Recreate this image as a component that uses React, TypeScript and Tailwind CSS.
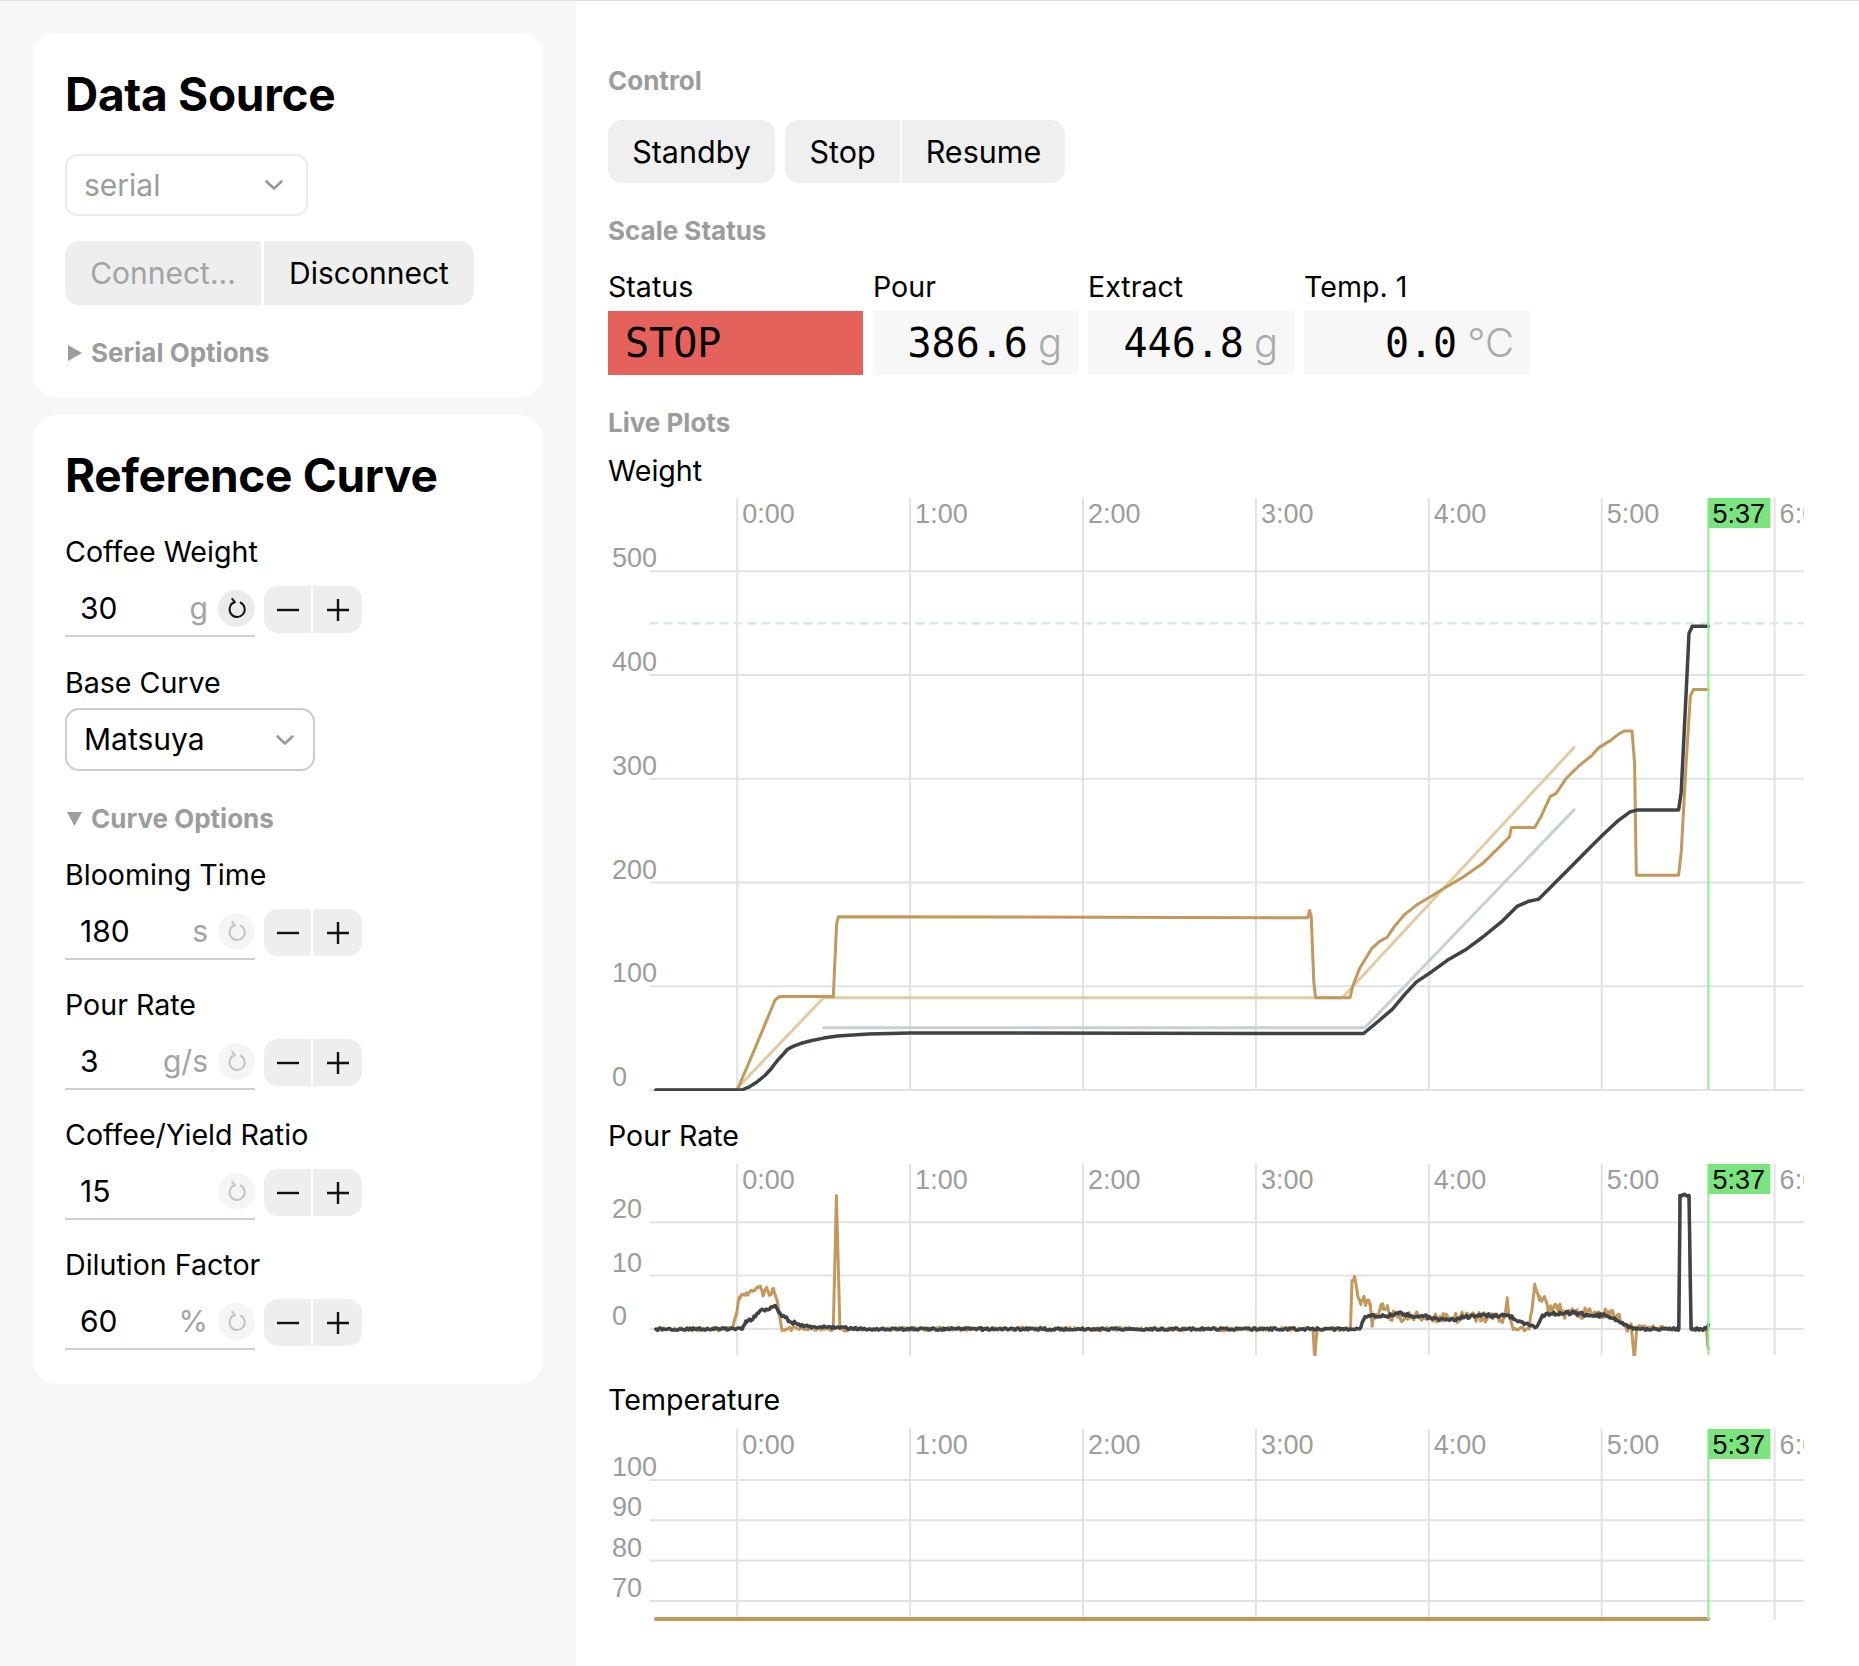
import React from 'react';

type Pt = [number, number];

const W = 1196;
const LEFT = 41.5;
const NOW = 5.617;
const X = (t: number) => 129.2 + 172.9 * t;

const TAN = '#c4985a';
const DARK = '#404346';
const LIGHT_TAN = '#e0cba2';
const BLUE_GRAY = '#c6cfd5';

function rng(seed: number) {
  let s = seed;
  return () => {
    s = (s * 16807) % 2147483647;
    return (s - 1) / 2147483646;
  };
}

function interp(keys: Pt[], t: number) {
  for (let i = 0; i < keys.length - 1; i++) {
    const [ta, va] = keys[i];
    const [tb, vb] = keys[i + 1];
    if (t >= ta && t <= tb) return tb === ta ? vb : va + ((vb - va) * (t - ta)) / (tb - ta);
  }
  return keys[keys.length - 1][1];
}

// keypoints plus a bit of sensor jitter between them
function jitter(keys: Pt[], amp: (v: number) => number, seed: number, step = 0.009): Pt[] {
  const r = rng(seed);
  const times = keys.map((k) => ({ t: k[0], key: true }));
  for (let t = keys[0][0] + step; t < keys[keys.length - 1][0]; t += step) times.push({ t, key: false });
  times.sort((a, b) => a.t - b.t);
  return times.map(({ t, key }) => {
    const v = interp(keys, t);
    return [t, key ? v : v + (r() - 0.5) * 2 * amp(v)] as Pt;
  });
}

const path = (pts: Pt[], Y: (v: number) => number) =>
  pts.map(([t, v], i) => `${i ? 'L' : 'M'}${X(t).toFixed(1)} ${Y(v).toFixed(1)}`).join(' ');

const weightTan: Pt[] = [
  [-0.47, 0], [0, 0], [0.09, 35], [0.22, 87], [0.245, 90], [0.556, 90], [0.575, 160], [0.585, 167],
  [3.3, 166], [3.31, 173], [3.32, 168], [3.335, 104], [3.345, 89], [3.544, 89], [3.56, 100], [3.6, 117],
  [3.668, 136], [3.713, 143], [3.758, 147], [3.803, 158], [3.859, 169], [3.927, 178], [4.017, 187],
  [4.084, 194], [4.197, 205], [4.309, 218], [4.377, 229], [4.467, 244], [4.478, 253], [4.613, 253],
  [4.647, 263], [4.703, 283], [4.737, 286], [4.793, 300], [4.872, 313], [4.94, 322], [4.984, 330],
  [5.052, 337], [5.097, 343], [5.13, 346], [5.175, 346], [5.19, 315], [5.2, 207], [5.445, 207],
  [5.46, 229], [5.49, 319], [5.513, 380], [5.531, 386], [NOW, 386],
];

const weightDark: Pt[] = [
  [-0.47, 0], [0.026, 0], [0.07, 3], [0.116, 8], [0.16, 14], [0.194, 20], [0.23, 28], [0.258, 33],
  [0.29, 39], [0.323, 42], [0.37, 45], [0.426, 47.5], [0.5, 50], [0.58, 52], [0.76, 54], [1.0, 55],
  [3.623, 54.5], [3.713, 67], [3.79, 78], [3.86, 92], [3.927, 104], [4.017, 114], [4.107, 125],
  [4.22, 136], [4.309, 147], [4.42, 162], [4.51, 177], [4.579, 182], [4.636, 184], [4.714, 197],
  [4.827, 216], [4.917, 231], [5.007, 246], [5.097, 260], [5.164, 268], [5.209, 270], [5.445, 270],
  [5.46, 287], [5.49, 388], [5.505, 440], [5.524, 447], [NOW, 447],
];

const weightRef: Pt[] = [[-0.01, 0], [0.5, 89], [3.5, 89], [4.84, 330]];
const weightExtractRef: Pt[] = [[0.5, 60], [3.63, 60], [4.84, 270]];

const pourTanKeys: Pt[] = [
  [-0.47, 0], [-0.026, 0], [0.013, 6], [0.05, 6.5], [0.1, 7.2], [0.13, 8], [0.15, 6.2], [0.17, 7.8],
  [0.19, 6.4], [0.21, 7.6], [0.233, 5], [0.258, 0], [0.556, 0], [0.574, 25], [0.594, 0], [3.33, 0],
  [3.342, -5.2], [3.355, 0], [3.547, 0], [3.556, 9.1], [3.572, 9.6], [3.59, 6], [3.61, 5.4],
  [3.63, 5.1], [3.66, 4.5], [3.672, 0.5], [3.69, 2], [3.73, 3.8], [3.76, 4.4], [3.78, 2.6],
  [3.82, 2.2], [4.44, 2.2], [4.452, 5.3], [4.466, 2.3], [4.49, 0], [4.58, 0], [4.613, 8.4],
  [4.64, 5.4], [4.67, 5.7], [4.69, 3], [4.72, 4], [4.75, 4.3], [4.77, 3], [5.09, 2.6], [5.12, 1.3],
  [5.15, -0.4], [5.17, 1], [5.187, -5.2], [5.205, 0.4], [5.446, 0], [5.453, 25], [5.505, 25],
  [5.517, 0], [5.605, 0], [NOW, -3.8],
];

const pourDarkKeys: Pt[] = [
  [-0.47, 0], [0.03, 0], [0.05, 1.5], [0.09, 1.8], [0.116, 2.9], [0.142, 3.6], [0.168, 3.7],
  [0.194, 4.1], [0.22, 4.4], [0.245, 3.1], [0.297, 1.6], [0.35, 0.8], [0.426, 0.4], [0.6, 0.3],
  [0.7, 0], [3.6, 0], [3.63, 2.3], [3.668, 2.65], [3.77, 2.5], [3.81, 3], [3.9, 2.5], [3.99, 2.3],
  [4.06, 1.6], [4.17, 2], [4.22, 2.3], [4.35, 2.5], [4.44, 2.65], [4.49, 2], [4.556, 1],
  [4.623, 0.4], [4.657, 2.6], [4.69, 2.9], [4.83, 3], [4.92, 2.65], [5.03, 2.5], [5.08, 1.6],
  [5.16, 0.3], [5.2, 0], [5.446, 0], [5.453, 25], [5.505, 25], [5.517, 0], [5.61, 0], [NOW, 0.8],
];

const pourTan = jitter(pourTanKeys, (v) => (Math.abs(v) > 1 && Math.abs(v) < 6 ? 1.1 : 0.35), 11);
const pourDark = jitter(pourDarkKeys, (v) => (v > 1 && v < 6 ? 0.35 : 0.22), 29);

interface Series {
  pts: Pt[];
  color: string;
  width: number;
}

interface ChartProps {
  id: string;
  height: number;
  bottom: number;
  ticks: { v: number; label: string }[];
  Y: (v: number) => number;
  series: Series[];
  dashed?: number;
}

function Chart({ id, height, bottom, ticks, Y, series, dashed }: ChartProps) {
  const now = X(NOW);
  return (
    <svg width={W} height={height} className="block font-['Liberation_Sans',Arial,sans-serif] text-[27px]">
      <defs>
        <clipPath id={id}>
          <rect x={LEFT} y={0} width={W - LEFT} height={bottom + 1} />
        </clipPath>
      </defs>
      {[0, 1, 2, 3, 4, 5, 6].map((m) => (
        <g key={m}>
          <line x1={X(m)} x2={X(m)} y1={0} y2={bottom} stroke="#e2e2e2" strokeWidth={2} />
          <text x={X(m) + 5} y={25} fill="#9c9c9c">
            {m}:00
          </text>
        </g>
      ))}
      {ticks.map((t) => (
        <g key={t.label}>
          <line x1={LEFT} x2={W} y1={Y(t.v)} y2={Y(t.v)} stroke="#e2e2e2" strokeWidth={2} />
          <text x={4} y={Y(t.v) - 4} fill="#9c9c9c">
            {t.label}
          </text>
        </g>
      ))}
      <g clipPath={`url(#${id})`}>
        {dashed !== undefined && (
          <line x1={LEFT} x2={W} y1={Y(dashed)} y2={Y(dashed)} stroke="#dfe5e8" strokeWidth={2.5} strokeDasharray="9 5" />
        )}
        {series.map((s, i) => (
          <path
            key={i}
            d={path(s.pts, Y)}
            fill="none"
            stroke={s.color}
            strokeWidth={s.width}
            strokeLinejoin="round"
            strokeLinecap="round"
          />
        ))}
      </g>
      <line x1={now} x2={now} y1={0} y2={bottom} stroke="#97ea97" strokeWidth={2} />
      <rect x={now} y={0} width={62} height={30} fill="#79e57c" />
      <text x={now + 4} y={25} fill="#000">
        5:37
      </text>
    </svg>
  );
}

function Chevron() {
  return (
    <svg width="20" height="12" viewBox="0 0 20 12">
      <path d="M2.5 2.5l7.5 7 7.5-7" fill="none" stroke="#9a9a9a" strokeWidth="2.6" strokeLinecap="round" strokeLinejoin="round" />
    </svg>
  );
}

function ResetIcon({ color }: { color: string }) {
  return (
    <svg width="26" height="26" viewBox="0 0 26 26">
      <path d="M16.6 6.6 A7.6 7.6 0 1 1 10.6 6.2" fill="none" stroke={color} strokeWidth="1.9" strokeLinecap="round" />
      <path d="M8.2 2.8 L10.8 6.2 L7.4 7.8" fill="none" stroke={color} strokeWidth="1.9" strokeLinecap="round" strokeLinejoin="round" />
    </svg>
  );
}

function Stepper() {
  return (
    <div className="ml-[9px] flex h-[47px] gap-[2px]">
      <button className="flex w-[47px] items-center justify-center rounded-l-[14px] bg-[#eeeeee]">
        <svg width="24" height="24" viewBox="0 0 24 24">
          <path d="M1 12h22" stroke="#111" strokeWidth="2.4" />
        </svg>
      </button>
      <button className="flex w-[49px] items-center justify-center rounded-r-[14px] bg-[#eeeeee]">
        <svg width="24" height="24" viewBox="0 0 24 24">
          <path d="M1 12h22M12 1v22" stroke="#111" strokeWidth="2.4" />
        </svg>
      </button>
    </div>
  );
}

function NumberRow({ value, unit, active }: { value: string; unit: string; active?: boolean }) {
  return (
    <div className="mt-[12px] flex h-[55px] items-center">
      <div className="flex h-full w-[190px] items-center border-b-2 border-[#d0d0d0] pl-[15px]">
        <span className="flex-1 text-[30px] text-black">{value}</span>
        <span className="text-[30px] text-[#a3a3a3]">{unit}</span>
        <span
          className={
            active
              ? 'ml-[10px] flex h-[37px] w-[37px] items-center justify-center rounded-full bg-[#ebebeb]'
              : 'ml-[10px] flex h-[37px] w-[37px] items-center justify-center rounded-full bg-[#f5f5f5]'
          }
        >
          <ResetIcon color={active ? '#111' : '#c4c4c4'} />
        </span>
      </div>
      <Stepper />
    </div>
  );
}

function Field({ label, value, unit, first }: { label: string; value: string; unit: string; first?: boolean }) {
  return (
    <div className={first ? 'mt-[22px]' : 'mt-[27px]'}>
      <div className="text-[28.6px] leading-[36px]">{label}</div>
      <NumberRow value={value} unit={unit} />
    </div>
  );
}

function Disclosure({ open, children }: { open?: boolean; children: React.ReactNode }) {
  return (
    <div className="flex items-center gap-[9px] text-[26px] leading-[32px] font-bold text-[#9c9c9c]">
      <svg width="15" height="16" viewBox="0 0 15 16" className="ml-[2px]">
        {open ? <path d="M0 1h15L7.5 15z" fill="#9c9c9c" /> : <path d="M1 0l14 8L1 16z" fill="#9c9c9c" />}
      </svg>
      <span>{children}</span>
    </div>
  );
}

function SectionLabel({ children, className }: { children: React.ReactNode; className?: string }) {
  return <div className={`text-[26px] leading-[32px] font-bold text-[#9c9c9c] ${className ?? ''}`}>{children}</div>;
}

function ValueBox({ value, unit, width }: { value: string; unit: string; width: string }) {
  return (
    <div className={`flex h-[64px] items-center justify-end gap-[10px] bg-[#f7f7f7] pr-[16px] ${width}`}>
      <span className="font-['DejaVu_Sans_Mono',monospace] text-[40px] text-black">{value}</span>
      <span className="text-[40px] font-light text-[#ababab]">{unit}</span>
    </div>
  );
}

function Label({ children, className }: { children: React.ReactNode; className?: string }) {
  return <div className={`text-[28.6px] leading-[36px] ${className ?? ''}`}>{children}</div>;
}

export default function App() {
  const wY = (v: number) => 592 - 1.0375 * v;
  const pY = (v: number) => 165 - 5.34 * v;
  const tY = (v: number) => 51 + (100 - v) * 4.03;

  return (
    <div className="flex min-h-screen border-t border-[#dedede] font-['Inter','Noto_Sans',sans-serif] text-black">
      <aside className="flex w-[576px] shrink-0 flex-col gap-[18px] bg-[#f7f7f7] px-[33px] pt-[32px] pb-[40px]">
        <section className="rounded-[24px] bg-white px-[32px] pt-[34px] pb-[28px]">
          <h2 className="text-[46px] leading-[55px] font-bold tracking-[-0.3px]">Data Source</h2>
          <div className="mt-[32px] flex h-[62px] w-[243px] items-center justify-between rounded-[12px] border-2 border-[#ebebeb] pr-[22px] pl-[17px]">
            <span className="text-[30px] text-[#9c9c9c]">serial</span>
            <Chevron />
          </div>
          <div className="mt-[25px] flex h-[64px] gap-[3px]">
            <button className="w-[196px] rounded-l-[14px] bg-[#eeeeee] text-[30px] text-[#a3a3a3]">Connect...</button>
            <button className="w-[210px] rounded-r-[14px] bg-[#eeeeee] text-[30px] text-black">Disconnect</button>
          </div>
          <div className="mt-[32px]">
            <Disclosure>Serial Options</Disclosure>
          </div>
        </section>

        <section className="rounded-[24px] bg-white px-[32px] pt-[33px] pb-[34px]">
          <h2 className="text-[46px] leading-[55px] font-bold tracking-[-0.3px]">Reference Curve</h2>
          <Label className="mt-[31px]">Coffee Weight</Label>
          <NumberRow value="30" unit="g" active />
          <Label className="mt-[28px]">Base Curve</Label>
          <div className="mt-[7px] flex h-[63px] w-[250px] items-center justify-between rounded-[14px] border-2 border-[#cccccc] pr-[18px] pl-[17px]">
            <span className="text-[30px]">Matsuya</span>
            <Chevron />
          </div>
          <div className="mt-[32px]">
            <Disclosure open>Curve Options</Disclosure>
          </div>
          <Field first label="Blooming Time" value="180" unit="s" />
          <Field label="Pour Rate" value="3" unit="g/s" />
          <Field label="Coffee/Yield Ratio" value="15" unit="" />
          <Field label="Dilution Factor" value="60" unit="%" />
        </section>
      </aside>

      <main className="min-w-0 flex-1 bg-white pt-[64px] pl-[32px]">
        <SectionLabel>Control</SectionLabel>
        <div className="mt-[23px] flex h-[63px] gap-[10px] text-[30.5px]">
          <button className="w-[167px] rounded-[14px] bg-[#efefef]">Standby</button>
          <div className="flex gap-[2px]">
            <button className="w-[115px] rounded-l-[14px] bg-[#efefef]">Stop</button>
            <button className="w-[163px] rounded-r-[14px] bg-[#efefef]">Resume</button>
          </div>
        </div>

        <SectionLabel className="mt-[32px]">Scale Status</SectionLabel>
        <div className="mt-[22px] flex gap-[10px]">
          <div className="w-[255px]">
            <Label>Status</Label>
            <div className="mt-[6px] flex h-[64px] items-center bg-[#e4615c] pl-[17px] font-['DejaVu_Sans_Mono',monospace] text-[40px]">
              STOP
            </div>
          </div>
          <div>
            <Label>Pour</Label>
            <div className="mt-[6px]">
              <ValueBox value="386.6" unit="g" width="w-[205px]" />
            </div>
          </div>
          <div>
            <Label>Extract</Label>
            <div className="mt-[6px]">
              <ValueBox value="446.8" unit="g" width="w-[206px]" />
            </div>
          </div>
          <div>
            <Label>Temp. 1</Label>
            <div className="mt-[6px]">
              <ValueBox value="0.0" unit="°C" width="w-[226px]" />
            </div>
          </div>
        </div>

        <SectionLabel className="mt-[32px]">Live Plots</SectionLabel>

        <Label className="mt-[14px]">Weight</Label>
        <div className="mt-[9px]">
          <Chart
            id="clip-weight"
            height={594}
            bottom={592}
            Y={wY}
            dashed={450}
            ticks={[
              { v: 500, label: '500' },
              { v: 400, label: '400' },
              { v: 300, label: '300' },
              { v: 200, label: '200' },
              { v: 100, label: '100' },
              { v: 0, label: '0' },
            ]}
            series={[
              { pts: weightRef, color: LIGHT_TAN, width: 3 },
              { pts: weightExtractRef, color: BLUE_GRAY, width: 3 },
              { pts: weightTan, color: TAN, width: 3 },
              { pts: weightDark, color: DARK, width: 3.5 },
            ]}
          />
        </div>

        <Label className="mt-[26px]">Pour Rate</Label>
        <div className="mt-[10px]">
          <Chart
            id="clip-pour"
            height={193}
            bottom={191}
            Y={pY}
            ticks={[
              { v: 20, label: '20' },
              { v: 10, label: '10' },
              { v: 0, label: '0' },
            ]}
            series={[
              { pts: pourTan, color: TAN, width: 3 },
              { pts: pourDark, color: DARK, width: 3.5 },
            ]}
          />
        </div>

        <Label className="mt-[25px]">Temperature</Label>
        <div className="mt-[11px]">
          <Chart
            id="clip-temp"
            height={193}
            bottom={191}
            Y={tY}
            ticks={[
              { v: 100, label: '100' },
              { v: 90, label: '90' },
              { v: 80, label: '80' },
              { v: 70, label: '70' },
            ]}
            series={[
              {
                pts: [
                  [-0.47, 65.5],
                  [NOW, 65.5],
                ],
                color: TAN,
                width: 4,
              },
            ]}
          />
        </div>
      </main>
    </div>
  );
}
